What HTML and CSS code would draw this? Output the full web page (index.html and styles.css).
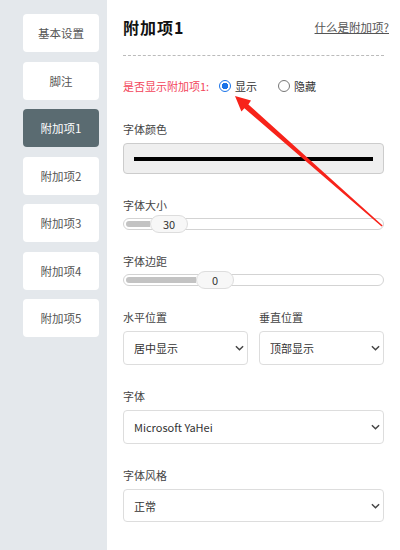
FILE: index.html
```html
<!DOCTYPE html>
<html lang="zh-CN">
<head>
  <meta charset="UTF-8" />
  <meta name="viewport" content="width=device-width, initial-scale=1.0" />
  <title>附加项设置</title>
  <link rel="stylesheet" href="styles.css">
</head>
<body>
  <div class="page">
    <aside class="sidebar">
      <button class="tab">基本设置</button>
      <button class="tab">脚注</button>
      <button class="tab active">附加项1</button>
      <button class="tab">附加项2</button>
      <button class="tab">附加项3</button>
      <button class="tab">附加项4</button>
      <button class="tab">附加项5</button>
    </aside>

    <main class="panel">
      <div class="panel-head">
        <h1 class="title">附加项1</h1>
        <a href="#" class="help">什么是附加项?</a>
      </div>

      <div class="show-row">
        <span class="show-label">是否显示附加项1:</span>
        <label class="radio"><input type="radio" name="show" checked /> 显示</label>
        <label class="radio"><input type="radio" name="show" /> 隐藏</label>
      </div>

      <div class="field first">
        <div class="label">字体颜色</div>
        <div class="color-box"><span class="color-bar"></span></div>
      </div>

      <div class="field">
        <div class="label slim">字体大小</div>
        <div class="slider">
          <span class="fill" style="width: 24px"></span>
          <span class="thumb">30</span>
        </div>
      </div>

      <div class="field">
        <div class="label slim">字体边距</div>
        <div class="slider">
          <span class="fill" style="width: 70px"></span>
          <span class="thumb">0</span>
        </div>
      </div>

      <div class="field cols">
        <div class="col">
          <div class="label">水平位置</div>
          <div class="select">
            <select><option>居中显示</option></select>
            <svg class="chev" viewBox="0 0 10 6" width="9" height="6"><path d="M1 1l4 4 4-4" fill="none" stroke="#444" stroke-width="1.6"/></svg>
          </div>
        </div>
        <div class="col">
          <div class="label">垂直位置</div>
          <div class="select">
            <select><option>顶部显示</option></select>
            <svg class="chev" viewBox="0 0 10 6" width="9" height="6"><path d="M1 1l4 4 4-4" fill="none" stroke="#444" stroke-width="1.6"/></svg>
          </div>
        </div>
      </div>

      <div class="field">
        <div class="label">字体</div>
        <div class="select">
          <select><option>Microsoft YaHei</option></select>
          <svg class="chev" viewBox="0 0 10 6" width="9" height="6"><path d="M1 1l4 4 4-4" fill="none" stroke="#444" stroke-width="1.6"/></svg>
        </div>
      </div>

      <div class="field">
        <div class="label">字体风格</div>
        <div class="select short">
          <select><option>正常</option></select>
          <svg class="chev" viewBox="0 0 10 6" width="9" height="6"><path d="M1 1l4 4 4-4" fill="none" stroke="#444" stroke-width="1.6"/></svg>
        </div>
      </div>
    </main>

    <!-- annotation arrow drawn over the screenshot -->
    <svg class="arrow" viewBox="0 0 400 550" width="400" height="550">
      <polygon fill="#f7231a" points="235,96 251,100.5 248.4,104.4 382.6,225.4 381.6,226.6 244.4,108.2 241.4,111.4" />
    </svg>
  </div>
</body>
</html>
```

FILE: styles.css
```css
* {
  box-sizing: border-box;
}
html, body {
  margin: 0;
  padding: 0;
}
body {
  font-family: "Noto Sans CJK SC", "Noto Sans", sans-serif;
  font-size: 11px;
  color: #333;
  background: #fff;
}
.page {
  position: relative;
  display: flex;
  width: 400px;
  height: 550px;
  overflow: hidden;
}
.sidebar {
  width: 107px;
  flex-shrink: 0;
  background: #e4e8ec;
  padding: 14px 8px 0 23px;
  display: flex;
  flex-direction: column;
  gap: 9.5px;
}
.tab {
  height: 38px;
  border: none;
  border-radius: 4px;
  background: #fff;
  color: #555;
  font-family: inherit;
  font-size: 11.5px;
  padding: 0;
  cursor: pointer;
}
.tab.active {
  background: #5a6b71;
  color: #fff;
}
.panel {
  flex: 1;
  padding: 0 16px;
}
.panel-head {
  display: flex;
  justify-content: space-between;
  align-items: center;
  padding: 18px 0 19px;
  border-bottom: 1px dashed #bbb;
}
.title {
  margin: 0;
  font-size: 16px;
  line-height: 18px;
  font-weight: bold;
  letter-spacing: 1px;
  color: #111;
}
.help {
  color: #555;
  font-size: 11.5px;
  text-decoration: underline;
  margin-right: -5px;
}
.show-row {
  display: flex;
  align-items: center;
  height: 16px;
  margin-top: 22px;
}
.show-label {
  color: #f2445a;
  width: 96px;
}
.radio {
  display: flex;
  align-items: center;
  gap: 4px;
  margin-right: 21px;
  color: #333;
}
.radio input {
  appearance: none;
  width: 12px;
  height: 12px;
  margin: 0;
  border: 1px solid #777;
  border-radius: 50%;
  background: #fff;
}
.radio input:checked {
  border-color: #1a73e8;
  background: radial-gradient(circle, #1a73e8 0 3px, #fff 3.5px);
}
.field {
  margin-top: 23px;
}
.field.first {
  margin-top: 27px;
}
.label {
  height: 16px;
  line-height: 16px;
  margin-bottom: 6px;
  color: #444;
}
.label.slim {
  margin-bottom: 5px;
}
.color-box {
  height: 31px;
  border: 1px solid #ccc;
  border-radius: 4px;
  background: #efefef;
  display: flex;
  align-items: center;
  padding: 0 10px;
}
.color-bar {
  flex: 1;
  height: 4px;
  background: #000;
}
.slider {
  height: 12px;
  border: 1px solid #d3d3d3;
  border-radius: 6px;
  background: #fff;
  display: flex;
  align-items: center;
  padding-left: 2px;
}
.fill {
  height: 6px;
  background: #c3c3c3;
  border-radius: 3px 0 0 3px;
}
.thumb {
  width: 38px;
  height: 18px;
  margin: -3px 0;
  border: 1px solid #ddd;
  border-radius: 9px;
  background: #f7f7f7;
  display: flex;
  align-items: center;
  justify-content: center;
  font-size: 11px;
}
.cols {
  display: flex;
  gap: 11px;
}
.col {
  flex: 1;
}
.select {
  position: relative;
  height: 34px;
}
.select.short {
  height: 33px;
}
.select select {
  appearance: none;
  width: 100%;
  height: 100%;
  border: 1px solid #ddd;
  border-radius: 4px;
  background: #fff;
  padding: 0 10px;
  font-family: inherit;
  font-size: 11px;
  color: #333;
}
.chev {
  position: absolute;
  right: 4px;
  top: 50%;
  margin-top: -3px;
}
.arrow {
  position: absolute;
  left: 0;
  top: 0;
  pointer-events: none;
}
```
